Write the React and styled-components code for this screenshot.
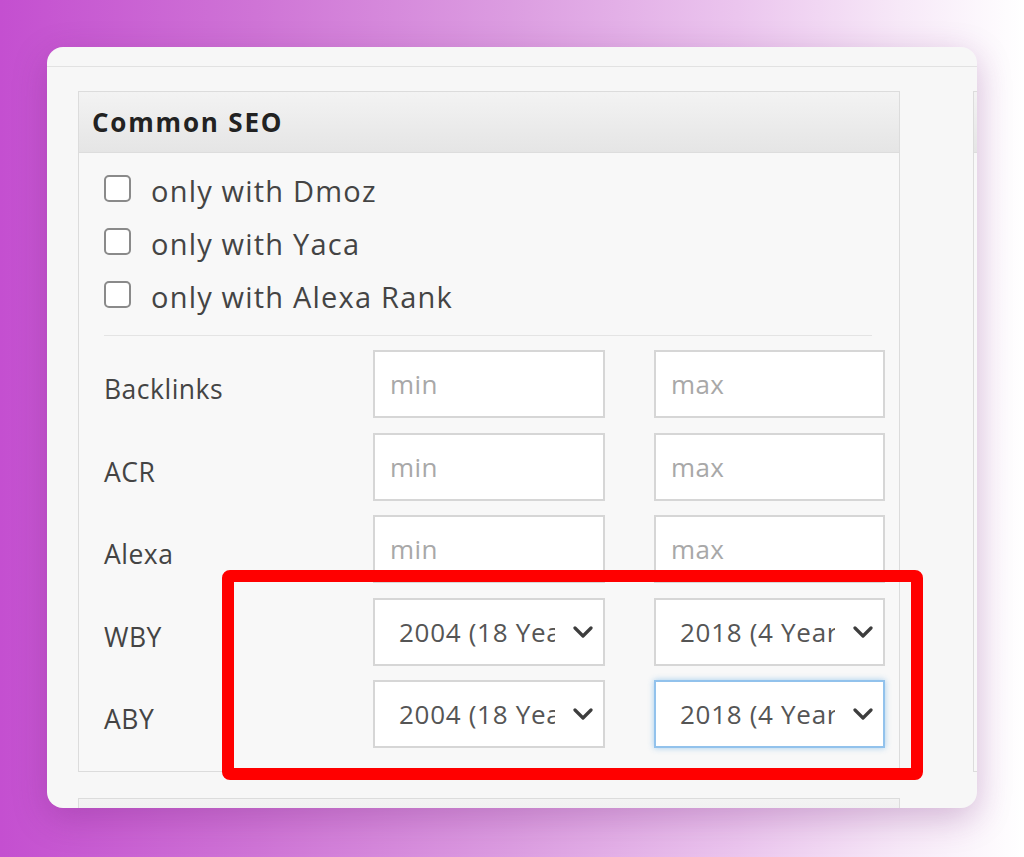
import styled, {createGlobalStyle} from 'styled-components';

const GlobalStyle = createGlobalStyle`
  html, body {
    margin: 0;
    padding: 0;
  }
  body {
    width: 1024px;
    height: 857px;
    overflow: hidden;
    background: linear-gradient(90deg, #c44fd0 0%, #cf74d6 25%, #dc9de1 50%, #ebc5ee 72%, #f7e9f8 88%, #ffffff 100%);
    font-family: "Open Sans", "Noto Sans", sans-serif;
  }
`;

const Page = styled.div`
  width: 1024px;
  height: 857px;
  box-sizing: border-box;
  padding: 47px 0 0 47px;
`;

const Card = styled.div`
  position: relative;
  width: 930px;
  height: 761px;
  border-radius: 16px;
  background: #f7f7f7;
  overflow: hidden;
  box-shadow: 0 10px 34px rgba(110, 30, 120, 0.28);
`;

const TopStrip = styled.div`
  height: 19px;
  border-bottom: 1px solid #e2e2e2;
`;

const Columns = styled.div`
  display: flex;
  gap: 73px;
  padding: 24px 0 0 31px;
`;

const MainColumn = styled.div`
  display: flex;
  flex-direction: column;
  gap: 26px;
  width: 822px;
  flex-shrink: 0;
`;

const Panel = styled.div`
  box-sizing: border-box;
  width: ${p => p.$width || '822px'};
  flex-shrink: 0;
  border: 1px solid #dcdcdc;
  background: #f8f8f8;
  height: ${p => p.$height || 'auto'};
`;

const PanelHeader = styled.div`
  height: 60px;
  display: flex;
  align-items: center;
  padding-left: 13px;
  background: linear-gradient(#f3f3f3, #e5e5e5);
  border-bottom: 1px solid #dddddd;
`;

const PanelTitle = styled.h3`
  margin: 0;
  font-size: 26px;
  font-weight: 700;
  color: #222;
  letter-spacing: 1.8px;
`;

const PanelBody = styled.div`
  padding: 11px 14px 24px 25px;
`;

const CheckRow = styled.label`
  display: flex;
  align-items: center;
  height: 53px;
  gap: 20px;
  font-size: 29px;
  color: #444;
  letter-spacing: 1.2px;
`;

const CheckBox = styled.span`
  box-sizing: border-box;
  width: 27px;
  height: 27px;
  border: 2px solid #8a8a8a;
  border-radius: 5px;
  background: #fff;
  margin-top: -4px;
  flex-shrink: 0;
`;

const Divider = styled.hr`
  margin: 12px 13px 14px 0;
  border: 0;
  border-top: 1px solid #e4e4e4;
`;

const FieldGrid = styled.div`
  display: grid;
  grid-template-columns: 220px 232px 231px;
  column-gap: 49px;
  row-gap: 14.5px;
`;

const FieldLabel = styled.div`
  display: flex;
  align-items: center;
  padding-top: 10px;
  font-size: 26.5px;
  color: #444;
  letter-spacing: 0.5px;
`;

const TextInput = styled.div`
  box-sizing: border-box;
  height: 68px;
  display: flex;
  align-items: center;
  padding-left: 15px;
  background: #fff;
  border: 2px solid #d6d6d6;
  font-size: 26px;
  color: #a8a8a8;
  letter-spacing: 0.4px;
`;

const Select = styled.div`
  box-sizing: border-box;
  height: 68px;
  display: flex;
  align-items: center;
  padding: 0 10px 0 24px;
  background: #fff;
  border: 2px solid ${p => (p.$focused ? '#92c2ec' : '#d6d6d6')};
  box-shadow: ${p => (p.$focused ? '0 0 6px rgba(60, 150, 225, 0.45)' : 'none')};
  font-size: 26px;
  color: #555;
  letter-spacing: 0.7px;
`;

const SelectText = styled.span`
  flex: 1;
  overflow: hidden;
  white-space: nowrap;
  margin-right: 18px;
`;

const Chevron = styled.svg`
  width: 20px;
  height: 12px;
  flex-shrink: 0;
`;

const Highlight = styled.div`
  position: absolute;
  left: 175px;
  top: 523px;
  width: 701px;
  height: 210px;
  box-sizing: border-box;
  border: 12px solid #ff0000;
  border-radius: 8px;
  pointer-events: none;
`;

const SideHeader = styled.div`
  height: 60px;
  background: linear-gradient(#f3f3f3, #e5e5e5);
  border-bottom: 1px solid #dddddd;
`;

const ChevronIcon = () => (
    <Chevron viewBox="0 0 20 12">
        <path d="M2 2l8 8 8-8" fill="none" stroke="#3d3d3d" strokeWidth="3.2" strokeLinecap="round" strokeLinejoin="round"/>
    </Chevron>
);

const Dropdown = ({value, focused}) => (
    <Select $focused={focused}>
        <SelectText>{value}</SelectText>
        <ChevronIcon/>
    </Select>
);

const checks = ['only with Dmoz', 'only with Yaca', 'only with Alexa Rank'];
const ranges = ['Backlinks', 'ACR', 'Alexa'];

const App = () => {
    return (
        <Page>
            <GlobalStyle/>
            <Card>
                <TopStrip/>
                <Columns>
                    <MainColumn>
                        <Panel $height="681px">
                            <PanelHeader>
                                <PanelTitle>Common SEO</PanelTitle>
                            </PanelHeader>
                            <PanelBody>
                                {checks.map(c => (
                                    <CheckRow key={c}>
                                        <CheckBox/>
                                        {c}
                                    </CheckRow>
                                ))}
                                <Divider/>
                                <FieldGrid>
                                    {ranges.flatMap(r => [
                                        <FieldLabel key={r}>{r}</FieldLabel>,
                                        <TextInput key={r + '-min'}>min</TextInput>,
                                        <TextInput key={r + '-max'}>max</TextInput>
                                    ])}
                                    <FieldLabel>WBY</FieldLabel>
                                    <Dropdown value="2004 (18 Years)"/>
                                    <Dropdown value="2018 (4 Years)"/>
                                    <FieldLabel>ABY</FieldLabel>
                                    <Dropdown value="2004 (18 Years)"/>
                                    <Dropdown value="2018 (4 Years)" focused/>
                                </FieldGrid>
                            </PanelBody>
                        </Panel>
                        <Panel $height="60px">
                            <SideHeader/>
                        </Panel>
                    </MainColumn>
                    <Panel $width="300px" $height="681px">
                        <SideHeader/>
                    </Panel>
                </Columns>
                <Highlight/>
            </Card>
        </Page>
    )
}

export default App
